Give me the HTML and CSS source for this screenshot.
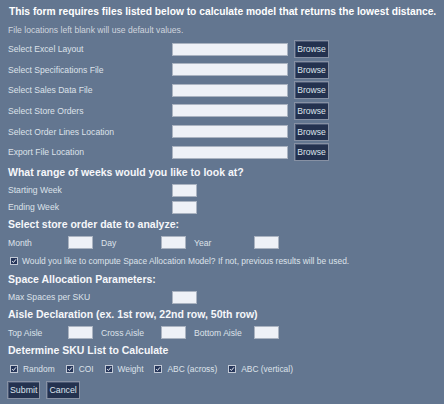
FILE: index.html
```html
<!DOCTYPE html>
<html>
<head>
<meta charset="utf-8">
<title>Model form</title>
<link rel="stylesheet" href="styles.css">
</head>
<body>
<form class="form">
  <h1 class="title">This form requires files listed below to calculate model that returns the lowest distance.</h1>
  <p class="note">File locations left blank will use default values.</p>

  <div class="files">
    <div class="file-row"><span class="label">Select Excel Layout</span><span class="text-input wide"></span><span class="btn">Browse</span></div>
    <div class="file-row"><span class="label">Select Specifications File</span><span class="text-input wide"></span><span class="btn">Browse</span></div>
    <div class="file-row"><span class="label">Select Sales Data File</span><span class="text-input wide"></span><span class="btn">Browse</span></div>
    <div class="file-row"><span class="label">Select Store Orders</span><span class="text-input wide"></span><span class="btn">Browse</span></div>
    <div class="file-row"><span class="label">Select Order Lines Location</span><span class="text-input wide"></span><span class="btn">Browse</span></div>
    <div class="file-row"><span class="label">Export File Location</span><span class="text-input wide"></span><span class="btn">Browse</span></div>
  </div>

  <h2 class="section">What range of weeks would you like to look at?</h2>
  <div class="rows">
    <div class="pair"><span class="label">Starting Week</span><span class="text-input small"></span></div>
    <div class="pair"><span class="label">Ending Week</span><span class="text-input small"></span></div>
  </div>

  <h2 class="section">Select store order date to analyze:</h2>
  <div class="triple">
    <span class="label short">Month</span><span class="text-input small"></span>
    <span class="label short">Day</span><span class="text-input small"></span>
    <span class="label short">Year</span><span class="text-input small"></span>
  </div>
  <div class="check-row compute">
    <span class="check"><svg viewBox="0 0 8 8" width="8" height="8"><path d="M1.5 4.2 L3.2 6 L6.6 1.8" fill="none" stroke="#eef1f7" stroke-width="1.3"/></svg></span>
    <span class="label">Would you like to compute Space Allocation Model? If not, previous results will be used.</span>
  </div>

  <h2 class="section">Space Allocation Parameters:</h2>
  <div class="rows">
    <div class="pair"><span class="label">Max Spaces per SKU</span><span class="text-input small"></span></div>
  </div>

  <h2 class="section">Aisle Declaration (ex. 1st row, 22nd row, 50th row)</h2>
  <div class="triple">
    <span class="label short">Top Aisle</span><span class="text-input small"></span>
    <span class="label short">Cross Aisle</span><span class="text-input small"></span>
    <span class="label short">Bottom Aisle</span><span class="text-input small"></span>
  </div>

  <h2 class="section">Determine SKU List to Calculate</h2>
  <div class="check-row options">
    <span class="opt"><span class="check"><svg viewBox="0 0 8 8" width="8" height="8"><path d="M1.5 4.2 L3.2 6 L6.6 1.8" fill="none" stroke="#eef1f7" stroke-width="1.3"/></svg></span><span class="label">Random</span></span>
    <span class="opt"><span class="check"><svg viewBox="0 0 8 8" width="8" height="8"><path d="M1.5 4.2 L3.2 6 L6.6 1.8" fill="none" stroke="#eef1f7" stroke-width="1.3"/></svg></span><span class="label">COI</span></span>
    <span class="opt"><span class="check"><svg viewBox="0 0 8 8" width="8" height="8"><path d="M1.5 4.2 L3.2 6 L6.6 1.8" fill="none" stroke="#eef1f7" stroke-width="1.3"/></svg></span><span class="label">Weight</span></span>
    <span class="opt"><span class="check"><svg viewBox="0 0 8 8" width="8" height="8"><path d="M1.5 4.2 L3.2 6 L6.6 1.8" fill="none" stroke="#eef1f7" stroke-width="1.3"/></svg></span><span class="label">ABC (across)</span></span>
    <span class="opt"><span class="check"><svg viewBox="0 0 8 8" width="8" height="8"><path d="M1.5 4.2 L3.2 6 L6.6 1.8" fill="none" stroke="#eef1f7" stroke-width="1.3"/></svg></span><span class="label">ABC (vertical)</span></span>
  </div>

  <div class="actions">
    <span class="btn action">Submit</span>
    <span class="btn action">Cancel</span>
  </div>
</form>
</body>
</html>
```

FILE: styles.css
```css
* { box-sizing: border-box; }
html, body {
  margin: 0;
  padding: 0;
  background: #637690;
  height: 100%;
}
body {
  font-family: "Liberation Sans", Arial, sans-serif;
  color: #dde2ea;
}
.form {
  padding: 5px 0 0 8px;
  display: flex;
  flex-direction: column;
}
.title {
  margin: 0;
  font-size: 10.25px;
  line-height: 14px;
  height: 14px;
  font-weight: bold;
  color: #ffffff;
  white-space: nowrap;
  padding-left: 1px;
}
.note {
  margin: 5px 0 0 0;
  font-size: 8.6px;
  line-height: 12px;
  height: 12px;
  color: #cfd5de;
}
.label {
  font-size: 8.6px;
  color: #dde2ea;
  white-space: nowrap;
}
.files {
  margin-top: 4px;
  display: flex;
  flex-direction: column;
  gap: 2.67px;
}
.file-row {
  height: 18px;
  display: flex;
  align-items: center;
}
.file-row .label,
.pair .label {
  width: 164px;
}
.text-input {
  display: block;
  background: #eef1f7;
  border: 1px solid #aab3c1;
  height: 13px;
}
.text-input.wide { width: 116px; }
.text-input.small { width: 25px; height: 13px; }
.btn {
  display: flex;
  align-items: center;
  justify-content: center;
  background: #24324f;
  border: 1px solid #8791a4;
  box-shadow: inset 1px 1px 0 #4a5874;
  color: #dde3ec;
  font-size: 8.6px;
  height: 18px;
  width: 35px;
  margin-left: 6px;
}
.section {
  margin: 3.67px 0 0 0;
  font-size: 10.5px;
  line-height: 14px;
  height: 14px;
  font-weight: bold;
  color: #f6f7fa;
  white-space: nowrap;
}
.rows {
  margin-top: 5px;
  display: flex;
  flex-direction: column;
  gap: 3.67px;
}
.pair {
  height: 13px;
  display: flex;
  align-items: center;
}
.triple {
  margin-top: 5px;
  height: 13px;
  display: flex;
  align-items: center;
}
.triple .label.short {
  width: 60px;
}
.triple .text-input + .label { margin-left: 8px; }
.check-row {
  display: flex;
  align-items: center;
  height: 13px;
}
.check-row.compute {
  margin-top: 5.67px;
  padding-left: 2px;
  gap: 4px;
}
.check-row.compute .label { font-size: 8.45px; }
.check-row.options {
  margin-top: 6px;
  padding-left: 2px;
  gap: 11px;
}
.options .label { font-size: 8.4px; }
.opt {
  display: flex;
  align-items: center;
  gap: 5px;
}
.check {
  display: flex;
  align-items: center;
  justify-content: center;
  width: 8px;
  height: 8px;
  background: #26365a;
  border: 1px solid #c3cad6;
}
.check svg { width: 6px; height: 6px; }
.actions {
  margin-top: 5px;
  display: flex;
  gap: 6px;
  margin-left: -1px;
}
.btn.action {
  margin-left: 0;
  height: 18px;
  width: auto;
  padding: 0 2px;
  font-size: 8.8px;
}
```
